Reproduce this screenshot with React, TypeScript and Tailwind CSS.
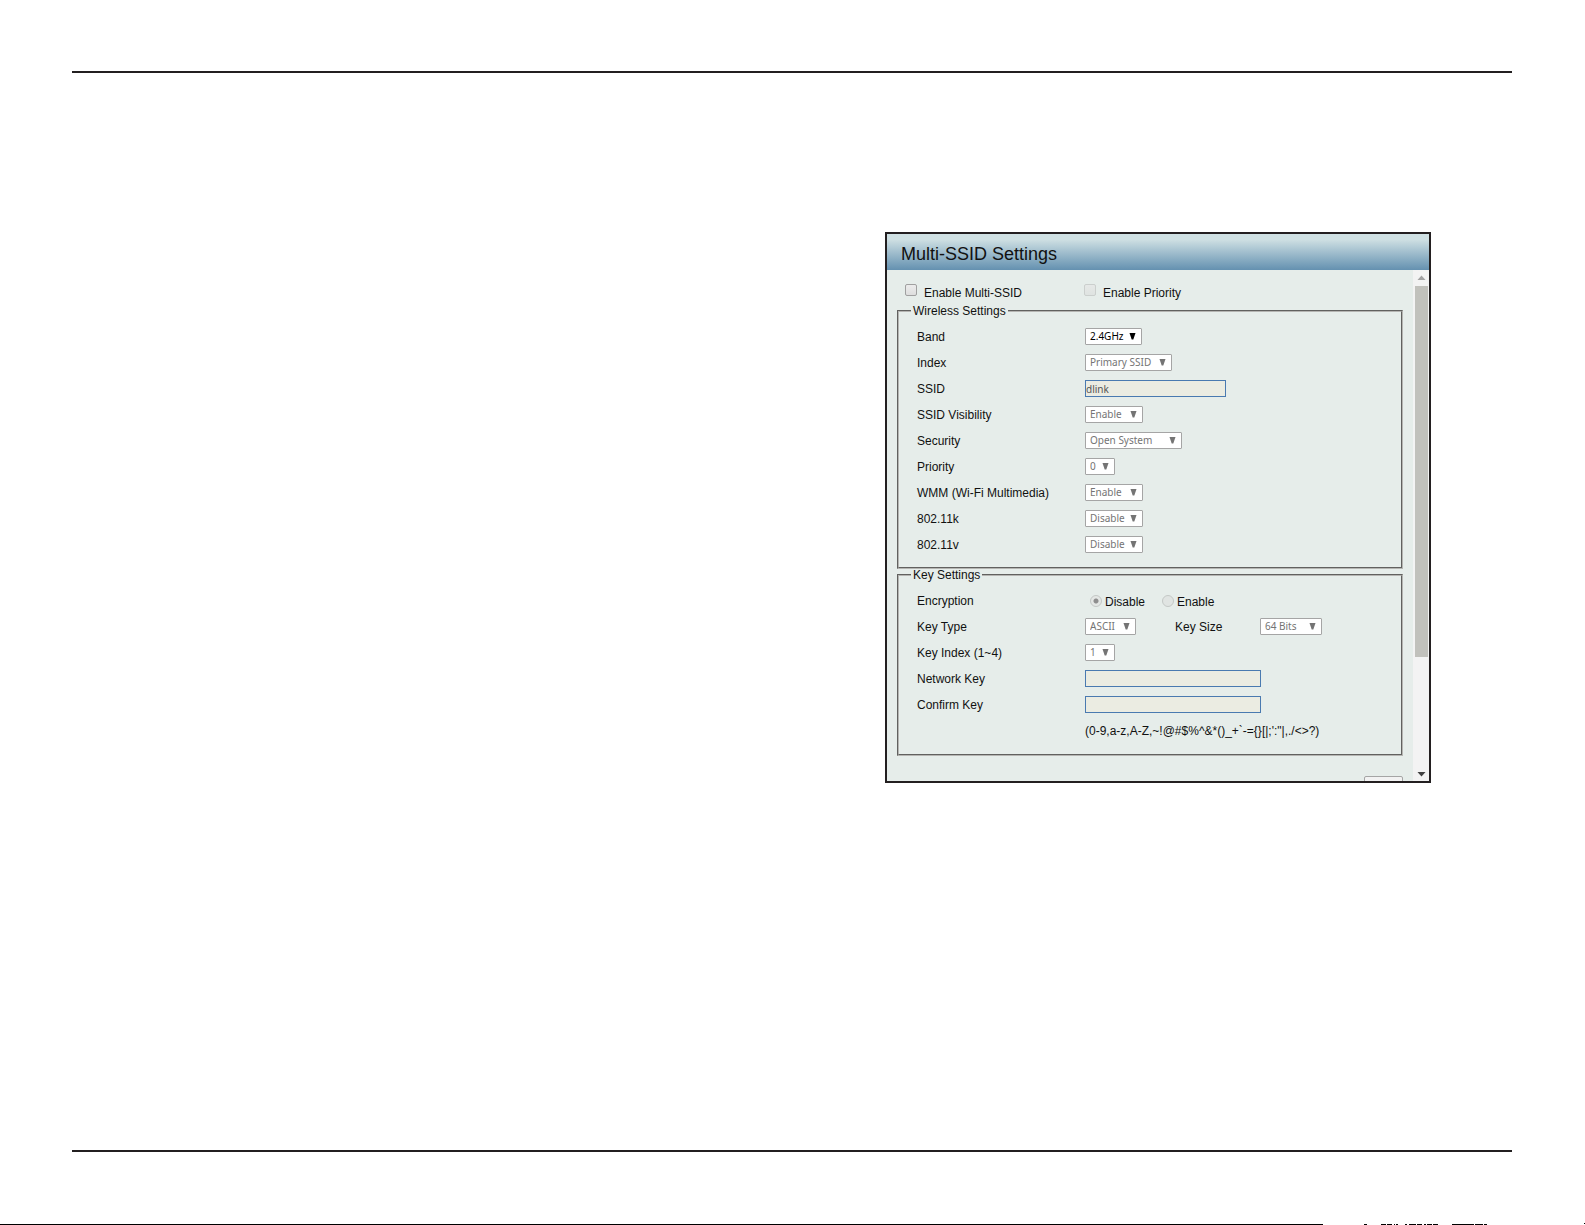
import type { ReactNode } from "react";

function SelectBox({ id, value, width, disabled = true }: { id: string; value: string; width: string; disabled?: boolean }) {
  return (
    <span className={`relative block h-[17px] ${width} ${disabled ? "text-[#747474]" : "text-black"}`}>
      <select
        id={id}
        disabled={disabled}
        defaultValue={value}
        className="block h-[17px] w-full appearance-none rounded-[1px] border border-[#a5a5a5] bg-white pl-1 font-['Noto_Sans',sans-serif] text-[10px] leading-[15px] disabled:opacity-100"
      >
        <option>{value}</option>
      </select>
      <svg className="pointer-events-none absolute top-[5px] right-[6px]" width="7" height="7" viewBox="0 0 7 7" aria-hidden="true">
        <path d="M0.5 0H6.5L4.3 6.5H2.7Z" fill="currentColor" />
      </svg>
    </span>
  );
}

function TextBox({ id, value, width }: { id: string; value?: string; width: string }) {
  return (
    <input
      id={id}
      type="text"
      disabled
      defaultValue={value}
      className={`block h-[17px] rounded-none border border-[#4a7ab0] bg-[#ebece2] p-0 font-['Noto_Sans',sans-serif] text-[10px] leading-[15px] text-[#555] ${width}`}
    />
  );
}

function Row({ label, id, children }: { label: string; id?: string; children: ReactNode }) {
  return (
    <div className="flex h-[17px] items-center">
      {id ? (
        <label htmlFor={id} className="w-[168px] shrink-0">
          {label}
        </label>
      ) : (
        <span className="w-[168px] shrink-0">{label}</span>
      )}
      {children}
    </div>
  );
}

function Group({ title, className, children }: { title: string; className: string; children: ReactNode }) {
  return (
    <fieldset className={`border-2 border-[#b5b5b2] px-3 [border-style:groove] ${className}`}>
      <legend className="px-[2px] leading-[14px]">{title}</legend>
      <div className="mt-[10px] flex flex-col gap-[9px] pl-[6px]">{children}</div>
    </fieldset>
  );
}

const checkboxStyle =
  "size-3 appearance-none rounded-[2px] border bg-linear-to-b from-[#ececec] to-[#dedede] border-[#a0a0a0] disabled:border-[#cbcfcd] disabled:from-[#e6e8e7] disabled:to-[#dfe3e1]";
const radioStyle =
  "size-3 appearance-none rounded-full border border-[#c4c8c6] bg-[#e0e4e2] checked:bg-[radial-gradient(circle,#8e8e8e_0_2px,#e4e7e5_3px)]";

export default function App() {
  return (
    <div className="flex min-h-screen flex-col bg-white font-['Liberation_Sans',Arial,sans-serif] text-[12px] text-[#111]">
      <hr className="mr-[73px] ml-[72px] mt-[71px] border-0 border-t-2 border-[#231f20]" />

      <main className="flex flex-1 justify-end pt-[159px] pr-[154px]">
        <section className="flex h-[551px] w-[546px] flex-col border-2 border-[#231f20] bg-[#e6edea]">
          <h1 className="h-9 shrink-0 bg-linear-to-b from-[#cfe0e3] from-15% to-[#6491b0] pt-[2px] pl-[14px] text-[18px] leading-9 text-[#111]">
            Multi-SSID Settings
          </h1>
          <div className="flex min-h-0 flex-1">
            <form className="min-w-0 flex-1 overflow-hidden pr-[10px] pl-[10px]">
              <div className="flex h-[34px] pt-[14px] pl-2">
                <input id="multi" type="checkbox" className={checkboxStyle} />
                <label htmlFor="multi" className="w-[167px] pt-px pl-[7px] leading-4">
                  Enable Multi-SSID
                </label>
                <input id="prio" type="checkbox" disabled className={checkboxStyle} />
                <label htmlFor="prio" className="pt-px pl-[7px] leading-4">
                  Enable Priority
                </label>
              </div>

              <Group title="Wireless Settings" className="pb-[14px]">
                <Row label="Band" id="band">
                  <SelectBox id="band" value="2.4GHz" width="w-[57px]" disabled={false} />
                </Row>
                <Row label="Index" id="index">
                  <SelectBox id="index" value="Primary SSID" width="w-[87px]" />
                </Row>
                <Row label="SSID" id="ssid">
                  <TextBox id="ssid" value="dlink" width="w-[141px]" />
                </Row>
                <Row label="SSID Visibility" id="visibility">
                  <SelectBox id="visibility" value="Enable" width="w-[58px]" />
                </Row>
                <Row label="Security" id="security">
                  <SelectBox id="security" value="Open System" width="w-[97px]" />
                </Row>
                <Row label="Priority" id="priority">
                  <SelectBox id="priority" value="0" width="w-[30px]" />
                </Row>
                <Row label="WMM (Wi-Fi Multimedia)" id="wmm">
                  <SelectBox id="wmm" value="Enable" width="w-[58px]" />
                </Row>
                <Row label="802.11k" id="k">
                  <SelectBox id="k" value="Disable" width="w-[58px]" />
                </Row>
                <Row label="802.11v" id="v">
                  <SelectBox id="v" value="Disable" width="w-[58px]" />
                </Row>
              </Group>

              <Group title="Key Settings" className="-mt-px pb-[15px]">
                <Row label="Encryption">
                  <input id="enc-off" type="radio" name="enc" disabled defaultChecked className={`ml-[5px] ${radioStyle}`} />
                  <label htmlFor="enc-off" className="w-[60px] pt-[3px] pl-[3px]">
                    Disable
                  </label>
                  <input id="enc-on" type="radio" name="enc" disabled className={radioStyle} />
                  <label htmlFor="enc-on" className="pt-[3px] pl-[3px]">
                    Enable
                  </label>
                </Row>
                <Row label="Key Type" id="key-type">
                  <SelectBox id="key-type" value="ASCII" width="w-[51px]" />
                  <label htmlFor="key-size" className="ml-[39px] w-[85px]">
                    Key Size
                  </label>
                  <SelectBox id="key-size" value="64 Bits" width="w-[62px]" />
                </Row>
                <Row label="Key Index (1~4)" id="key-index">
                  <SelectBox id="key-index" value="1" width="w-[30px]" />
                </Row>
                <Row label="Network Key" id="network-key">
                  <TextBox id="network-key" width="w-[176px]" />
                </Row>
                <Row label="Confirm Key" id="confirm-key">
                  <TextBox id="confirm-key" width="w-[176px]" />
                </Row>
                <Row label="">
                  <span>{"(0-9,a-z,A-Z,~!@#$%^&*()_+`-={}[|;':\"|,./<>?)"}</span>
                </Row>
              </Group>

              <div className="mt-5 flex justify-end">
                <button type="button" aria-label="Add" className="h-[18px] w-[39px] rounded-[2px] border border-[#a5a5a5] bg-[#f2f2f2]" />
              </div>
            </form>

            <div className="flex w-4 flex-col items-center bg-[#f3f3f3]">
              <svg width="16" height="16" viewBox="0 0 16 16" aria-hidden="true">
                <path d="M4.5 10L8.5 5.5L12.5 10Z" fill="#a3a3a3" />
              </svg>
              <div className="ml-px h-[371px] w-[13px] bg-[#c1c1bc]" />
              <div className="flex-1" />
              <svg width="16" height="16" viewBox="0 0 16 16" aria-hidden="true">
                <path d="M4.5 7L8.5 11.5L12.5 7Z" fill="#404040" />
              </svg>
            </div>
          </div>
        </section>
      </main>

      <hr className="mr-[73px] mb-[71px] ml-[72px] border-0 border-t-2 border-[#231f20]" />
      <div className="flex items-end">
        <div className="h-px flex-1 bg-black" />
        <svg width="262" height="2" viewBox="0 0 262 2" shapeRendering="crispEdges" aria-hidden="true">
          <path
            d="M41 1.5h3M58 1.5h5M64 1.5h5M71 1.5h1M73 1.5h2M82 1.5h2M86 1.5h7M94 1.5h5M101 1.5h2M104 1.5h5M110 1.5h5M129 1.5h22M152 1.5h8M161 1.5h3M261 0.5h1"
            stroke="#000"
          />
        </svg>
      </div>
    </div>
  );
}
